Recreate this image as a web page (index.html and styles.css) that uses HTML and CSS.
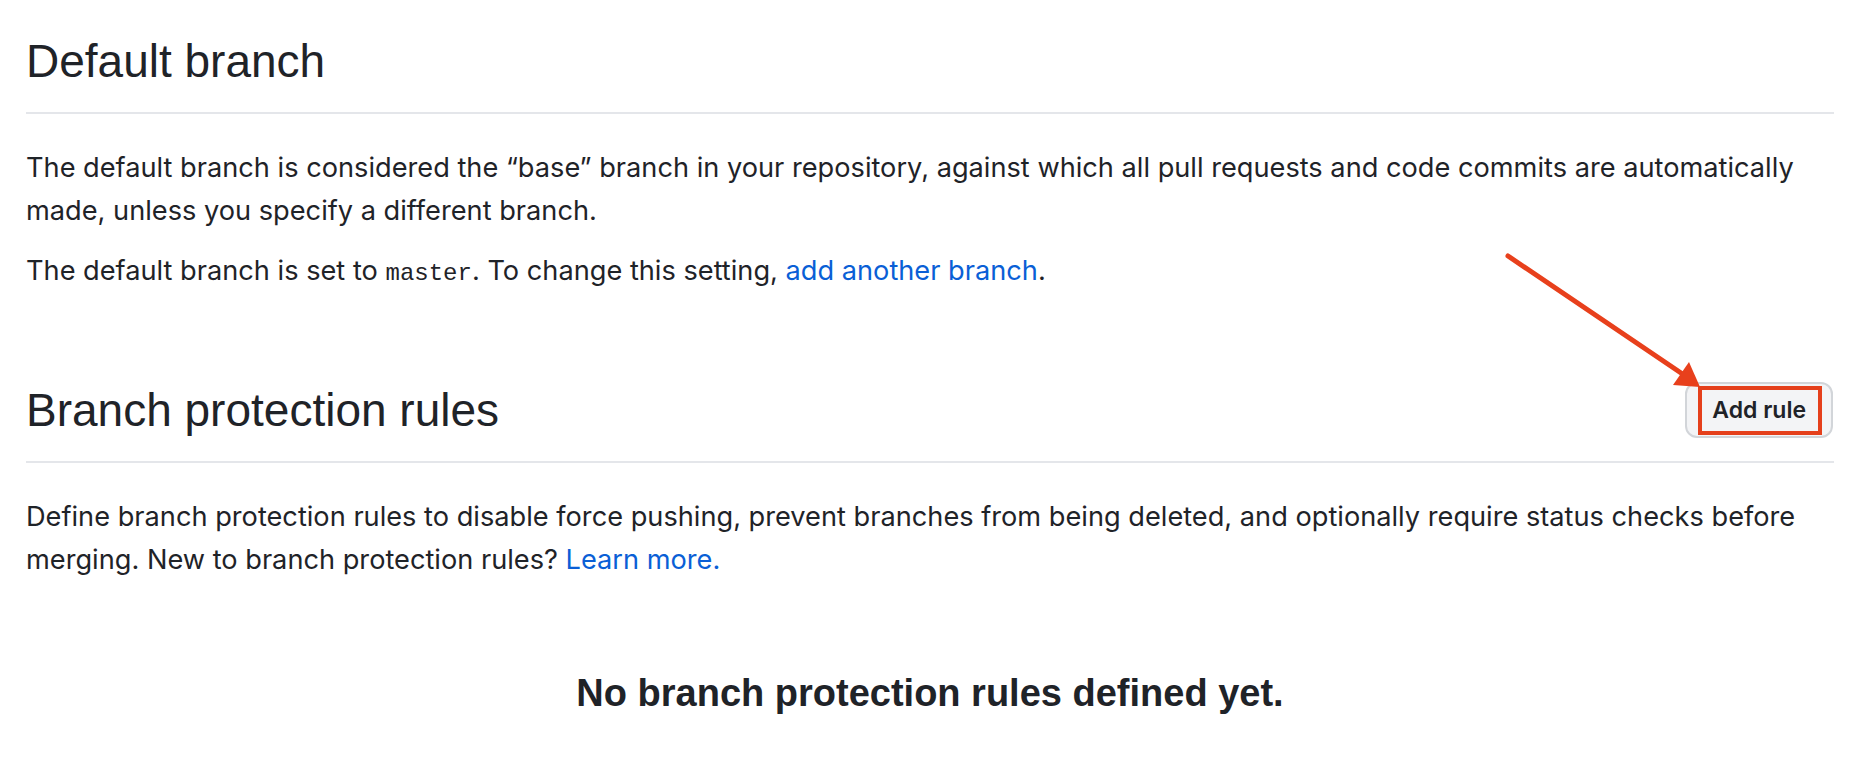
FILE: index.html
```html
<!DOCTYPE html>
<html lang="en">
<head>
<meta charset="utf-8">
<title>Branches</title>
<link rel="stylesheet" href="styles.css">
</head>
<body>
<main class="page">
  <section class="section">
    <div class="subhead">
      <h2 class="subhead-title">Default branch</h2>
    </div>
    <p class="text">The default branch is considered the “base” branch in your repository, against which all pull requests and code commits are automatically made, unless you specify a different branch.</p>
    <p class="text text-gap">The default branch is set to <code class="code">master</code>. To change this setting, <a class="link" href="#">add another branch</a>.</p>
  </section>

  <section class="section section-protect">
    <div class="subhead subhead-row">
      <h2 class="subhead-title">Branch protection rules</h2>
      <div class="btn-wrap">
        <button class="btn" type="button">Add rule</button>
        <span class="highlight-box"></span>
      </div>
    </div>
    <p class="text">Define branch protection rules to disable force pushing, prevent branches from being deleted, and optionally require status checks before merging. New to branch protection rules? <a class="link" href="#">Learn more.</a></p>
    <div class="blankslate">
      <h3 class="blankslate-title">No branch protection rules defined yet.</h3>
    </div>
  </section>

  <svg class="arrow" width="1858" height="758" viewBox="0 0 1858 758" aria-hidden="true">
    <line x1="1508" y1="256" x2="1684" y2="375" stroke="#e8401c" stroke-width="5" stroke-linecap="round"/>
    <polygon points="1700,387 1673,385 1689,362" fill="#e8401c"/>
  </svg>
</main>
</body>
</html>
```

FILE: styles.css
```css
* { box-sizing: border-box; }

html, body {
  margin: 0;
  padding: 0;
  background: #ffffff;
}

body {
  font-family: "Liberation Sans", Arial, sans-serif;
  color: #1f2328;
}

.page {
  position: relative;
  width: 1858px;
  height: 758px;
  padding: 33px 24px 0 26px;
  overflow: hidden;
}

.section-protect {
  margin-top: 87px;
}

.subhead {
  padding-bottom: 23px;
  border-bottom: 2px solid #e4e6ea;
}

.subhead-row {
  display: flex;
  align-items: center;
  justify-content: space-between;
}

.subhead-title {
  margin: 0;
  font-size: 46px;
  font-weight: 400;
  line-height: 56px;
  color: #1f2328;
}

.text {
  margin: 32px 0 0 0;
  font-family: Inter, "Liberation Sans", Arial, sans-serif;
  font-size: 27.2px;
  line-height: 43px;
}

.text-gap {
  margin-top: 17px;
}

.code {
  font-family: "Liberation Mono", "DejaVu Sans Mono", monospace;
  font-size: 24px;
}

.link {
  color: #0a5fd6;
  text-decoration: none;
}

.btn-wrap {
  position: relative;
  margin-right: 1px;
}

.btn {
  display: block;
  height: 56px;
  padding: 0 25px;
  font-family: Inter, "Liberation Sans", Arial, sans-serif;
  font-size: 23px;
  font-weight: 600;
  color: #1f2328;
  background: #f3f4f6;
  border: 2px solid #d2d5d9;
  border-radius: 12px;
}

.highlight-box {
  position: absolute;
  left: 13px;
  top: 4px;
  right: 11px;
  bottom: 3px;
  border: 4px solid #e5401c;
}

.blankslate {
  margin-top: 88px;
  text-align: center;
}

.blankslate-title {
  margin: 0;
  font-size: 38px;
  line-height: 48px;
  font-weight: 700;
}

.arrow {
  position: absolute;
  left: 0;
  top: 0;
  pointer-events: none;
}
```
